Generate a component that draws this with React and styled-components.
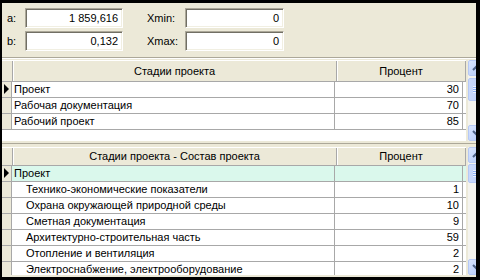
import React from 'react';
import styled, { createGlobalStyle } from 'styled-components';

const GlobalStyle = createGlobalStyle`
  html, body {
    margin: 0;
    padding: 0;
    background: #000;
  }
  body {
    font-family: "Liberation Sans", Arial, sans-serif;
    font-size: 11px;
    color: #000;
  }
`;

const stages = [
  { name: 'Проект', pct: 30, current: true },
  { name: 'Рабочая документация', pct: 70 },
  { name: 'Рабочий проект', pct: 85 },
];

const composition = [
  { name: 'Проект', group: true, current: true },
  { name: 'Технико-экономические показатели', pct: 1 },
  { name: 'Охрана окружающей природной среды', pct: 10 },
  { name: 'Сметная документация', pct: 9 },
  { name: 'Архитектурно-строительная часть', pct: 59 },
  { name: 'Отопление и вентиляция', pct: 2 },
  { name: 'Электроснабжение, электрооборудование', pct: 2 },
];

function Arrow({ down }) {
  return (
    <svg width="9" height="6" viewBox="0 0 9 6">
      <polyline
        points={down ? '1,1 4.5,4.5 8,1' : '1,5 4.5,1.5 8,5'}
        fill="none"
        stroke="#4d6185"
        strokeWidth="2"
      />
    </svg>
  );
}

function ScrollBar({ thumbTop, thumbHeight }) {
  return (
    <Scroll>
      <ScrollButton>
        <Arrow />
      </ScrollButton>
      <Track>
        <Thumb style={{ marginTop: thumbTop, height: thumbHeight }}>
          <Grip />
        </Thumb>
      </Track>
      <ScrollButton>
        <Arrow down />
      </ScrollButton>
    </Scroll>
  );
}

function Pointer() {
  return (
    <svg width="6" height="10" viewBox="0 0 6 10">
      <polygon points="0,0 5,5 0,10" fill="#000" />
    </svg>
  );
}

function Grid({ title, rows, height, thumbTop, thumbHeight, headerHeight }) {
  return (
    <GridBox $height={height}>
      <Table>
        <HeaderRow $h={headerHeight}>
          <IndicatorHead />
          <HeadCell $w={323}>{title}</HeadCell>
          <HeadCell $w={128}>Процент</HeadCell>
        </HeaderRow>
        {rows.map((r) => (
          <Row key={r.name} $group={r.group}>
            <Indicator>{r.current && <Pointer />}</Indicator>
            <NameCell $indent={!r.group && rows[0].group}>{r.name}</NameCell>
            <NumCell>{r.pct}</NumCell>
          </Row>
        ))}
      </Table>
      <ScrollBar thumbTop={thumbTop} thumbHeight={thumbHeight} />
    </GridBox>
  );
}

export default function App() {
  return (
    <>
      <GlobalStyle />
      <Frame>
        <Window>
          <Params>
            <Label>a:</Label>
            <Edit>1 859,616</Edit>
            <span />
            <Label>Xmin:</Label>
            <Edit>0</Edit>
            <Label>b:</Label>
            <Edit>0,132</Edit>
            <span />
            <Label>Xmax:</Label>
            <Edit>0</Edit>
          </Params>
          <Bevel />
          <Grid
            title="Стадии проекта"
            rows={stages}
            height={83}
            headerHeight={20}
            thumbTop={2}
            thumbHeight={23}
          />
          <Splitter />
          <Grid
            title="Стадии проекта - Состав проекта"
            rows={composition}
            headerHeight={17}
            thumbTop={1}
            thumbHeight={19}
          />
        </Window>
      </Frame>
    </>
  );
}

const Frame = styled.div`
  width: 480px;
  height: 280px;
  box-sizing: border-box;
  padding: 3px 4px 3px 2px;
  background: #000;
`;

const Window = styled.div`
  height: 100%;
  background: #ece9d8;
  display: flex;
  flex-direction: column;
  overflow: hidden;
`;

const Params = styled.div`
  display: grid;
  grid-template-columns: 18px 98px 24px 38px 99px;
  grid-auto-rows: 20px;
  row-gap: 3px;
  padding: 5px 0 6px 5px;
  align-items: center;
`;

const Label = styled.span`
  line-height: 13px;
`;

const Edit = styled.div`
  height: 20px;
  box-sizing: border-box;
  background: #fff;
  border-style: solid;
  border-width: 1px;
  border-color: #aca899 #fff #fff #aca899;
  box-shadow: inset 1px 1px 0 #716f64, inset -1px -1px 0 #f1efe2;
  text-align: right;
  padding: 3px 4px 0 0;
  line-height: 13px;
`;

const Bevel = styled.div`
  height: 1px;
  background: #aca899;
  border-bottom: 1px solid #fff;
  margin-bottom: 1px;
`;

const Splitter = styled.div`
  height: 1px;
  background: #aca899;
  margin-bottom: 3px;
  flex-shrink: 0;
`;

const GridBox = styled.div`
  display: flex;
  height: ${(p) => (p.$height ? `${p.$height}px` : 'auto')};
  flex: ${(p) => (p.$height ? '0 0 auto' : '1 1 auto')};
  min-height: 0;
  overflow: hidden;
  border-bottom: 2px solid #ece9d8;
  box-sizing: border-box;
`;

const Table = styled.div`
  width: 464px;
  flex-shrink: 0;
  background: #fff;
  display: flex;
  flex-direction: column;
`;

const HeaderRow = styled.div`
  display: flex;
  height: ${(p) => p.$h}px;
  flex-shrink: 0;
  background: #ece9d8;
  border-top: 1px solid #fff;
  border-bottom: 1px solid #a8a8a8;
`;

const IndicatorHead = styled.div`
  width: 10px;
  border-right: 1px solid #a8a8a8;
`;

const HeadCell = styled.div`
  width: ${(p) => p.$w}px;
  border-right: 1px solid #a8a8a8;
  box-shadow: inset 1px 0 0 #fff;
  display: flex;
  align-items: center;
  justify-content: center;
`;

const Row = styled.div`
  display: flex;
  height: 15px;
  flex-shrink: 0;
  border-bottom: 1px solid #a8a8a8;
  background: ${(p) => (p.$group ? '#daf8ec' : '#fff')};
  line-height: 15px;
  white-space: nowrap;
`;

const Indicator = styled.div`
  width: 10px;
  background: #ece9d8;
  border-right: 1px solid #a8a8a8;
  display: flex;
  align-items: center;
  padding-left: 2px;
  box-sizing: border-box;
`;

const NameCell = styled.div`
  width: 323px;
  box-sizing: border-box;
  padding-left: ${(p) => (p.$indent ? '14px' : '2px')};
  border-right: 1px solid #a8a8a8;
  overflow: hidden;
`;

const NumCell = styled.div`
  width: 128px;
  box-sizing: border-box;
  padding-right: 3px;
  text-align: right;
  border-right: 1px solid #a8a8a8;
`;

const Scroll = styled.div`
  width: 17px;
  margin-left: 2px;
  flex-shrink: 0;
  display: flex;
  flex-direction: column;
  background: #f4f3ee;
`;

const ScrollButton = styled.div`
  height: 16px;
  flex-shrink: 0;
  box-sizing: border-box;
  border: 1px solid #b5c8f5;
  border-radius: 2px;
  background: linear-gradient(135deg, #d8e4fe 0%, #c1d3fb 60%, #b3c8f6 100%);
  display: flex;
  align-items: center;
  justify-content: center;
`;

const Track = styled.div`
  flex: 1;
  min-height: 0;
`;

const Thumb = styled.div`
  box-sizing: border-box;
  border: 1px solid #b5c8f5;
  border-radius: 2px;
  background: linear-gradient(90deg, #c9d8fc 0%, #bccffa 100%);
  display: flex;
  align-items: center;
  justify-content: center;
`;

const Grip = styled.div`
  width: 7px;
  height: 7px;
  background: repeating-linear-gradient(
    180deg,
    #eef3fe 0px,
    #eef3fe 1px,
    #8cb0f8 1px,
    #8cb0f8 2px
  );
`;
